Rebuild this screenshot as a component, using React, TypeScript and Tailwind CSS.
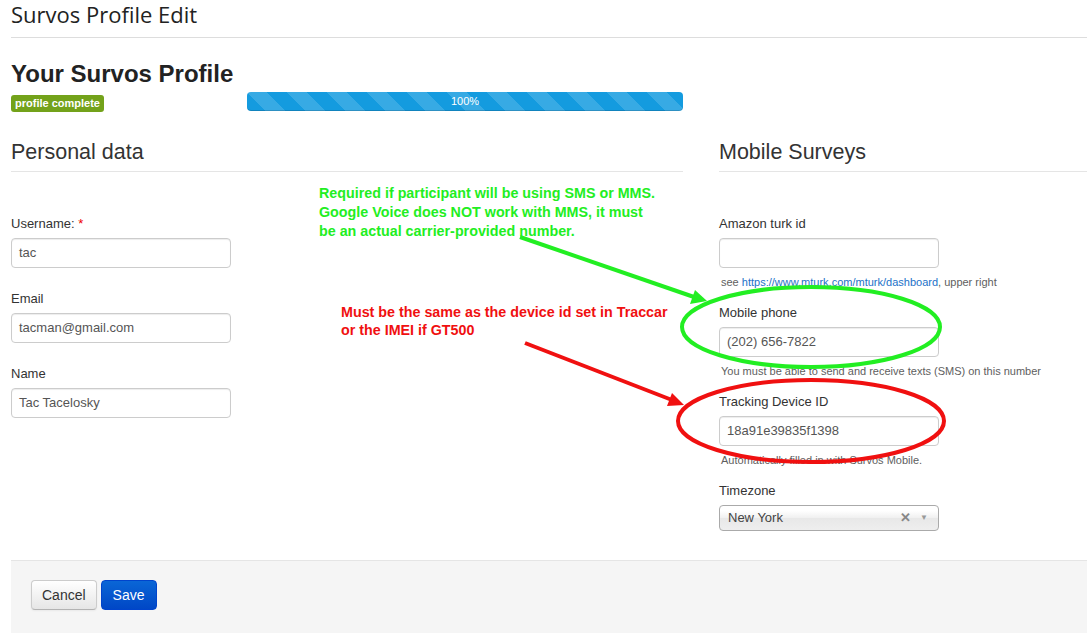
import React from "react";

const body = "font-['Liberation_Sans',Arial,sans-serif]";

const Field: React.FC<{ label: React.ReactNode; value?: string; help?: React.ReactNode }> = ({
  label,
  value = "",
  help,
}) => (
  <div className="flex flex-col">
    <label className="text-[13px] leading-[20px] text-[#333] mb-[4px]">{label}</label>
    <div className="w-[220px] h-[30px] border border-[#ccc] rounded-[4px] shadow-[inset_0_1px_1px_rgba(0,0,0,0.075)] bg-white flex items-center px-[7px] text-[13px] text-[#555]">
      {value}
    </div>
    {help ? (
      <div className="mt-[5px] mb-[12px] pl-[2px] text-[11px] leading-[18px] text-[#5e5e5e]">{help}</div>
    ) : (
      <div className="h-[21px]" />
    )}
  </div>
);

const SectionHead: React.FC<{ title: string }> = ({ title }) => (
  <div className="border-b border-[#e5e5e5] pb-[4px] mt-[26px]">
    <h3 className="text-[21.5px] leading-[30px] text-[#333]">{title}</h3>
  </div>
);

export default function App() {
  return (
    <div className={`relative w-[1087px] h-[633px] overflow-hidden bg-white ${body}`}>
      <div className="pl-[11px]">
        {/* page title */}
        <div className="border-b border-[#ddd] pb-[9px]">
          <h1 className="font-['Open_Sans',sans-serif] text-[22px] leading-[28px] text-[#222]">Survos Profile Edit</h1>
        </div>

        <h2 className="mt-[21px] text-[24px] leading-[30px] font-bold text-[#222]">Your Survos Profile</h2>
        <div className="flex items-center mt-[3px] h-[19px]">
          <div className="w-[236px]">
            <span className="inline-block bg-[#73a21a] text-white font-bold text-[11px] leading-[17px] px-[4px] rounded-[3px]">
              profile complete
            </span>
          </div>
          <div className="w-[436px] h-[19px] rounded-[4px] bg-[#149bdf] bg-[linear-gradient(45deg,rgba(255,255,255,.15)_25%,transparent_25%,transparent_50%,rgba(255,255,255,.15)_50%,rgba(255,255,255,.15)_75%,transparent_75%,transparent)] bg-[length:40px_40px] flex items-center justify-center text-white text-[11px] shadow-[inset_0_-1px_0_rgba(0,0,0,0.15)]">
            100%
          </div>
        </div>

        <div className="grid grid-cols-[672px_368px] gap-x-[36px]">
          {/* left column */}
          <div>
            <SectionHead title="Personal data" />
            <div className="mt-[42px] flex flex-col">
              <Field
                label={
                  <>
                    Username: <span className="text-[#e00]">*</span>
                  </>
                }
                value="tac"
              />
              <Field label="Email" value="tacman@gmail.com" />
              <Field label="Name" value="Tac Tacelosky" />
            </div>
          </div>

          {/* right column */}
          <div>
            <SectionHead title="Mobile Surveys" />
            <div className="mt-[42px] flex flex-col">
              <Field
                label="Amazon turk id"
                help={
                  <>
                    see <span className="text-[#2271c8]">https://www.mturk.com/mturk/dashboard</span>, upper right
                  </>
                }
              />
              <Field
                label="Mobile phone"
                value="(202) 656-7822"
                help="You must be able to send and receive texts (SMS) on this number"
              />
              <Field
                label="Tracking Device ID"
                value="18a91e39835f1398"
                help="Automatically filled in with Survos Mobile."
              />
              <label className="text-[13px] leading-[20px] text-[#333] mb-[4px]">Timezone</label>
              <div className="w-[220px] h-[26px] border border-[#aaa] rounded-[4px] bg-[linear-gradient(#fff_20%,#f0f0f0_50%,#e8e8e8_52%,#eee)] flex items-center pl-[8px] pr-[10px] text-[13px] text-[#444]">
                <span className="flex-1">New York</span>
                <span className="text-[#888] font-bold text-[13px] mr-[9px]">✕</span>
                <span className="text-[#999] text-[8px]">▼</span>
              </div>
            </div>
          </div>
        </div>

        {/* form actions */}
        <div className="mt-[29px] h-[120px] bg-[#f5f5f5] border-t border-[#e5e5e5] pt-[19px] pl-[20px] flex items-start gap-[4px]">
          <button className="h-[30px] px-[10px] text-[14px] text-[#333] rounded-[4px] border border-[#ccc] border-b-[#b3b3b3] bg-[linear-gradient(#fff,#e6e6e6)] shadow-[inset_0_1px_0_rgba(255,255,255,.2),0_1px_2px_rgba(0,0,0,.05)]">
            Cancel
          </button>
          <button className="h-[30px] px-[11px] text-[14px] text-white rounded-[4px] border border-[#0044cc] bg-[linear-gradient(#0a66d6,#0047c6)]">
            Save
          </button>
        </div>
      </div>

      {/* annotations */}
      <div className="absolute left-[319px] top-[184px] text-[14.3px] leading-[19px] font-bold text-[#22ee22]">
        Required if participant will be using SMS or MMS.
        <br />
        Google Voice does NOT work with MMS, it must
        <br />
        be an actual carrier-provided number.
      </div>
      <div className="absolute left-[341px] top-[303px] text-[14.3px] leading-[18px] font-bold text-[#f01010]">
        Must be the same as the device id set in Traccar
        <br />
        or the IMEI if GT500
      </div>
      <svg className="absolute left-0 top-0 pointer-events-none" width="1087" height="633">
        <line x1="520" y1="237" x2="694" y2="297" stroke="#22ee22" strokeWidth="4" />
        <polygon points="707,301 690,304 695,290" fill="#22ee22" />
        <ellipse cx="811" cy="327" rx="129" ry="40" fill="none" stroke="#22ee22" strokeWidth="4" />
        <line x1="525" y1="343" x2="672" y2="400" stroke="#f01010" strokeWidth="4" />
        <polygon points="684,405 667,406 672,393" fill="#f01010" />
        <ellipse cx="811" cy="421" rx="133" ry="41" fill="none" stroke="#f01010" strokeWidth="4" />
      </svg>
    </div>
  );
}
